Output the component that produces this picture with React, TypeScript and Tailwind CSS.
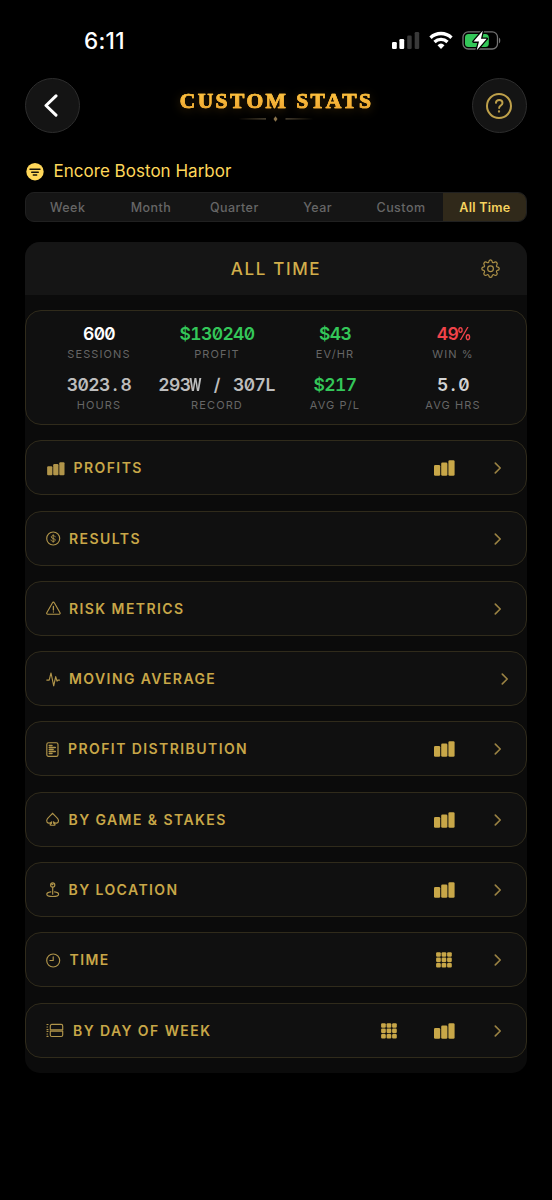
import type { ReactNode } from "react";

function Bars({ className }: { className: string }) {
  return (
    <svg viewBox="0 0 21 16" fill="currentColor" className={className}>
      <rect x="0" y="5" width="6.200" height="10.700" rx="1.300" />
      <rect x="7.200" y="2.500" width="6.200" height="13.200" rx="1.300" />
      <rect x="14.400" y="0.200" width="6.200" height="15.500" rx="1.300" />
    </svg>
  );
}

function GridDots() {
  return (
    <svg viewBox="0 0 16 16" fill="currentColor" className="h-4 w-4">
      {[0, 5.4, 10.8].map((y) =>
        [0, 5.5, 11].map((x) => <rect key={`${x}-${y}`} x={x + 0.1} y={y + 0.2} width="4.700" height="4.600" rx="1.100" />),
      )}
    </svg>
  );
}

function Chevron() {
  return (
    <svg viewBox="0 0 8 12" className="h-3 w-2 text-[#9a8243]" fill="none" stroke="currentColor" strokeWidth="1.600" strokeLinecap="round" strokeLinejoin="round">
      <path d="M1.300 1.100 6.200 6 1.300 10.900" />
    </svg>
  );
}

const line = {
  fill: "none",
  stroke: "currentColor",
  strokeWidth: 1.15,
  strokeLinecap: "round",
  strokeLinejoin: "round",
} as const;

const dollar = (
  <svg viewBox="0 0 15 15" className="h-[15px] w-[15px]" {...line}>
    <circle cx="7.2" cy="7.5" r="6.5" />
    <path d="M9.200 5.800C9 5 8.200 4.600 7.200 4.600c-1.100 0-1.900.5-1.900 1.400 0 2 4 1 4 3 0 .9-.9 1.400-2.100 1.400S5.200 9.900 5 9M7.200 3.700v7.600" strokeWidth=".9" />
  </svg>
);
const warning = (
  <svg viewBox="0 0 15 15" className="h-[15px] w-[15px]" {...line}>
    <path d="M6.500 1.700a1 1 0 0 1 1.800 0l5.700 10a1 1 0 0 1-.9 1.500H1.700a1 1 0 0 1-.9-1.500z" />
    <path d="M7.400 5.500v3.600M7.400 10.900v.1" strokeWidth="1.300" />
  </svg>
);
const pulse = (
  <svg viewBox="0 0 15 15" className="h-[15px] w-[15px]" {...line}>
    <path d="M.8 8.100h2.400L5 1l2.700 12.800L9.700 4.600l1.300 4.600.8-1.100h1.700" />
  </svg>
);
const doc = (
  <svg viewBox="0 0 13 15" className="h-[15px] w-[13px]" {...line}>
    <rect x=".8" y=".7" width="11.200" height="13.700" rx="1.700" />
    <path d="M3.300 3.600h2.700M3.300 5.600h6M3.300 7.500h3.800M3.300 9.400h6M3.300 11.400h2.700" strokeWidth="1.500" />
  </svg>
);
const spade = (
  <svg viewBox="0 0 14 15" className="h-[15px] w-[14px]" {...line}>
    <path d="M6.600 1.200c1 1.900 5.900 4.600 5.900 7.500 0 2.800-3.500 3.300-5 1.100-.1 1.300.4 2.100 1.300 2.500.5.200.3.900-.2.900h-4c-.5 0-.7-.7-.2-.9.9-.4 1.400-1.200 1.300-2.500-1.500 2.200-5 1.700-5-1.100 0-2.900 4.900-5.600 5.900-7.500z" />
  </svg>
);
const joystick = (
  <svg viewBox="0 0 14 16" className="h-4 w-[14px]" {...line}>
    <circle cx="6.700" cy="3" r="2.100" />
    <path d="M6 2.500h.7" strokeWidth="1.600" />
    <path d="M6.700 5.200v7M4.800 9.900C2.500 10.200.8 11 .8 12.200c0 1.400 2.600 2.300 5.900 2.300s5.900-.9 5.900-2.300c0-1.200-1.700-2-4-2.300" />
  </svg>
);
const clock = (
  <svg viewBox="0 0 15 15" className="h-[15px] w-[15px]" {...line}>
    <circle cx="7.200" cy="7.500" r="6.500" />
    <path d="M7.200 3.700v3.800H3.900" />
  </svg>
);
const dayStack = (
  <svg viewBox="0 0 18 15" className="h-[15px] w-[18px]" {...line}>
    <path d="M4.300 6.700V2.900a1.500 1.500 0 0 1 1.500-1.500h9.400a1.500 1.500 0 0 1 1.500 1.500v3.800zM4.300 8.100v3.900a1.500 1.500 0 0 0 1.500 1.500h9.400a1.500 1.500 0 0 0 1.500-1.500V8.100z" />
    <path d="M1 1.500h1M1 4h.5M1 6.700h1M1 8.500h1M1 11h.5M1 13.400h1" strokeWidth="1.200" />
  </svg>
);

type Row = { label: string; icon: ReactNode; gap: string; actions: ("bars" | "grid")[]; edge?: boolean };

const rows: Row[] = [
  { label: "PROFITS", icon: <Bars className="ml-[0.500px] mt-px h-[13.500px] w-[18px]" />, gap: "gap-[9px]", actions: ["bars"] },
  { label: "RESULTS", icon: dollar, gap: "gap-[8px]", actions: [] },
  { label: "RISK METRICS", icon: warning, gap: "gap-[8px]", actions: [] },
  { label: "MOVING AVERAGE", icon: pulse, gap: "gap-[8px]", actions: [], edge: true },
  { label: "PROFIT DISTRIBUTION", icon: doc, gap: "gap-[9px]", actions: ["bars"] },
  { label: "BY GAME & STAKES", icon: spade, gap: "gap-[8.500px]", actions: ["bars"] },
  { label: "BY LOCATION", icon: joystick, gap: "gap-[8.500px]", actions: ["bars"] },
  { label: "TIME", icon: clock, gap: "gap-[8.500px]", actions: ["grid"] },
  { label: "BY DAY OF WEEK", icon: dayStack, gap: "gap-[9px]", actions: ["grid", "bars"] },
];

const stats = [
  { value: "600", label: "SESSIONS", color: "text-white" },
  { value: "$130240", label: "PROFIT", color: "text-[#34c759]" },
  { value: "$43", label: "EV/HR", color: "text-[#34c759]" },
  { value: "49%", label: "WIN %", color: "text-[#f0434a]" },
  { value: "3023.8", label: "HOURS", color: "text-[#bdbdbd]" },
  { value: "293W / 307L", label: "RECORD", color: "text-[#bdbdbd]" },
  { value: "$217", label: "AVG P/L", color: "text-[#34c759]" },
  { value: "5.0", label: "AVG HRS", color: "text-[#d4d4d4]" },
];

/* Digits are tabular already; the other characters get a cell of the same width. */
function MonoValue({ value }: { value: string }) {
  return value.split(/([^\d$])/).map((part, i) => {
    if (!part) return null;
    if (/^[\d$]/.test(part)) return <span key={i}>{part}</span>;
    const squeeze = part === "W" ? "scale-x-[0.680] font-bold" : part === "%" ? "scale-x-[0.850] ml-[0.500px]" : "";
    return (
      <span key={i} className={`inline-flex w-[10.650px] justify-center tracking-normal ${squeeze}`}>
        {part}
      </span>
    );
  });
}

function StatusBar() {
  return (
    <div className="flex h-[78px] items-start justify-between pt-[27px] pr-[51px] pl-[84px] text-white">
      <span className="text-[22.500px] leading-[27px] font-[550] tracking-[0.300px]">6:11</span>
      <div className="mt-[4px] flex h-5 items-start">
        <svg viewBox="0 0 28 20" className="h-5 w-[28px]" fill="currentColor">
          <rect x="0" y="11" width="4.800" height="7" rx="1.200" />
          <rect x="7.400" y="8" width="4.800" height="10" rx="1.200" />
          <rect x="15.200" y="4.500" width="4.500" height="13.500" rx="1.200" fill="#393939" />
          <rect x="22.700" y="1" width="4.500" height="17" rx="1.200" fill="#393939" />
        </svg>
        <svg viewBox="0 0 24 20" className="ml-[8.500px] h-5 w-6" fill="none" stroke="currentColor" strokeWidth="3.300">
          <path d="M1.500 6.700a15.200 15.200 0 0 1 21 0" />
          <path d="M5.500 11a9.400 9.400 0 0 1 13 0" />
          <path d="M8.500 14.200a5.200 5.200 0 0 1 7 0L12 18.100z" fill="currentColor" stroke="none" />
        </svg>
        <svg viewBox="0 0 40 20" className="ml-[8.500px] h-5 w-10">
          <rect x="2" y=".8" width="34.500" height="17.200" rx="5.300" fill="none" stroke="#737373" strokeWidth="1.300" />
          <rect x="4" y="2.900" width="23.800" height="13" rx="3.500" fill="#34c759" />
          <path d="M38 6.700c1.700.5 1.700 5 0 5.500z" fill="#737373" />
          <path d="M21.800-.3 12.500 10.600H18l-2.300 8.700 10-11.600H20z" fill="#fff" stroke="#000" strokeWidth="2.600" paintOrder="stroke" strokeLinejoin="round" />
        </svg>
      </div>
    </div>
  );
}

function RoundButton({ label, children }: { label: string; children: ReactNode }) {
  return (
    <button aria-label={label} className="flex h-[55px] w-[55px] items-center justify-center rounded-full border border-[#2d2d2d] bg-[#141414]">
      {children}
    </button>
  );
}

export default function App() {
  return (
    <main className="flex h-[1200px] w-[552px] flex-col bg-black font-['Inter',sans-serif]">
      <StatusBar />

      <header className="flex h-[55px] justify-between px-[25px]">
        <RoundButton label="Back">
          <svg viewBox="0 0 14 23" className="mr-[3px] h-[23px] w-[14px]" fill="none" stroke="#fff" strokeWidth="3" strokeLinecap="round" strokeLinejoin="round">
            <path d="M12 1.900 2 11.500 12 21.100" />
          </svg>
        </RoundButton>
        <div className="flex flex-col items-center pt-[9px]">
          <h1 className="bg-gradient-to-b from-[#ffd04a] to-[#ed9a2b] bg-clip-text pl-[1px] font-['Liberation_Serif',serif] text-[21.500px] leading-[28px] font-bold tracking-[2.450px] whitespace-nowrap text-transparent drop-shadow-[0_2px_5px_rgba(255,170,30,0.200)] [-webkit-text-stroke:0.700px_#fab837]">
            CUSTOM STATS
          </h1>
          <svg viewBox="0 0 80 8" className="h-2 w-20">
            <defs>
              <linearGradient id="fadeIn"><stop stopColor="#6b5a38" stopOpacity="0" /><stop offset="1" stopColor="#5e5340" /></linearGradient>
              <linearGradient id="fadeOut"><stop stopColor="#5e5340" /><stop offset="1" stopColor="#6b5a38" stopOpacity="0" /></linearGradient>
            </defs>
            <rect x="2" y="3.300" width="28" height="1.200" fill="url(#fadeIn)" />
            <path d="M39.500 1.200 41.500 4 39.500 6.800 37.500 4z" fill="#8b744c" />
            <rect x="49.500" y="3.300" width="28" height="1.200" fill="url(#fadeOut)" />
          </svg>
        </div>
        <RoundButton label="Help">
          <svg viewBox="0 0 26 26" className="mr-px h-[26px] w-[26px]" fill="none" stroke="#bea04a" strokeLinecap="round" strokeLinejoin="round">
            <circle cx="13" cy="13" r="12" strokeWidth="2" />
            <path d="M9.900 9.900c.2-1.900 1.500-2.900 3.300-2.900 1.900 0 3.300 1.100 3.300 2.900 0 2.500-3.400 2.600-3.400 5.100" strokeWidth="1.900" />
            <circle cx="13" cy="18.500" r=".5" strokeWidth="1.300" />
          </svg>
        </RoundButton>
      </header>

      <div className="mt-[26px] flex h-[25px] items-center gap-[9.500px] pl-[26px] text-[#ffd75a]">
        <svg viewBox="0 0 18 18" className="h-[18px] w-[18px]">
          <circle cx="9" cy="8.700" r="8.700" fill="currentColor" />
          <path d="M4 6.200h10M5.700 9.200h6.600M7.300 12h3.400" stroke="#17130a" strokeWidth="1.400" strokeLinecap="round" />
        </svg>
        <span className="mt-px text-[17px] tracking-[0.020px]">Encore Boston Harbor</span>
      </div>

      <nav className="mx-[25px] mt-[8px] grid h-[30px] grid-cols-6 overflow-hidden rounded-[9px] border border-[#202020] bg-[#151515] text-[12.500px] font-medium tracking-[0.450px] text-[#666]">
        {["Week", "Month", "Quarter", "Year", "Custom"].map((t) => (
          <button key={t} className="pt-[2px] text-center">{t}</button>
        ))}
        <button className="-my-px -mr-px bg-[#30291a] pt-[2px] text-center font-semibold tracking-[0.250px] text-[#f6d35f]">All Time</button>
      </nav>

      <section className="mx-[25px] mt-[20px] flex h-[831px] flex-col rounded-[15px] bg-[#0b0b0b]">
        <div className="grid h-[53px] shrink-0 grid-cols-[60px_1fr_60px] items-center rounded-t-[15px] bg-[#151515] pt-px">
          <h2 className="col-start-2 mt-px text-center text-[17px] font-medium tracking-[1.650px] text-[#d1ae4b]">ALL TIME</h2>
          <svg viewBox="0 0 19 19" className="ml-[13px] h-[20px] w-[20px] text-[#ad9147]" {...line}>
            <path d="M8.300 2.900C8.500 1.200 8.900.9 10 .9s1.500.3 1.700 2c.1.500 1 .9 1.500.5 1.400-1 1.900-.9 2.700-.1s.9 1.300-.1 2.700c-.4.500 0 1.400.5 1.500 1.700.2 2 .6 2 1.700s-.3 1.500-2 1.700c-.5.100-.9 1-.5 1.500 1 1.400.9 1.900.1 2.700s-1.300.9-2.700-.1c-.5-.4-1.400 0-1.500.5-.2 1.700-.6 2-1.700 2s-1.500-.3-1.700-2c-.1-.5-1-.9-1.500-.5-1.400 1-1.900.9-2.700.1s-.9-1.300.1-2.700c.4-.5 0-1.400-.5-1.500-1.700-.2-2-.6-2-1.700s.3-1.500 2-1.700c.5-.1.900-1 .5-1.500-1-1.400-.9-1.900-.1-2.700s1.300-.9 2.700.1c.5.400 1.400 0 1.500-.5z" />
            <circle cx="10" cy="9.200" r="2.700" />
          </svg>
        </div>

        <div className="mt-[15px] flex flex-col gap-[15.300px]">
          <div className="grid h-[115px] grid-cols-4 content-start gap-y-[4px] rounded-[16px] border border-[#302b1b] bg-[#101010] px-[14px] pt-[12px]">
            {stats.map((s) => (
              <div key={s.label} className="flex h-[47.300px] flex-col items-center">
                <span className={`flex text-[17.500px] leading-[22px] font-semibold tracking-[-0.600px] whitespace-pre [font-feature-settings:'tnum','zero'] ${s.color}`}>
                  <MonoValue value={s.value} />
                </span>
                <span className="mt-[2.200px] text-[11px] leading-[14px] tracking-[1.100px] whitespace-nowrap text-[#666]">{s.label}</span>
              </div>
            ))}
          </div>

          {rows.map((r) => (
            <button
              key={r.label}
              className={`flex h-[55px] items-center justify-between rounded-[16px] border border-[#302b1b] bg-[#101010] pt-px pl-[20px] text-[#c8a748] ${r.edge ? "pr-[17px]" : "pr-[24.500px]"}`}
            >
              <span className={`flex items-center ${r.gap}`}>
                <span className="text-[#b1954a]">{r.icon}</span>
                <span className="text-[14px] leading-5 font-semibold tracking-[1.420px]">{r.label}</span>
              </span>
              <span className="flex items-center">
                {r.actions.map((a, i) => (
                  <span key={i} className={`flex w-[21px] justify-center ${i === r.actions.length - 1 ? "mr-[39px]" : "mr-[34px]"}`}>
                    {a === "bars" ? <Bars className="h-4 w-[21px]" /> : <GridDots />}
                  </span>
                ))}
                <Chevron />
              </span>
            </button>
          ))}
        </div>
      </section>
    </main>
  );
}
